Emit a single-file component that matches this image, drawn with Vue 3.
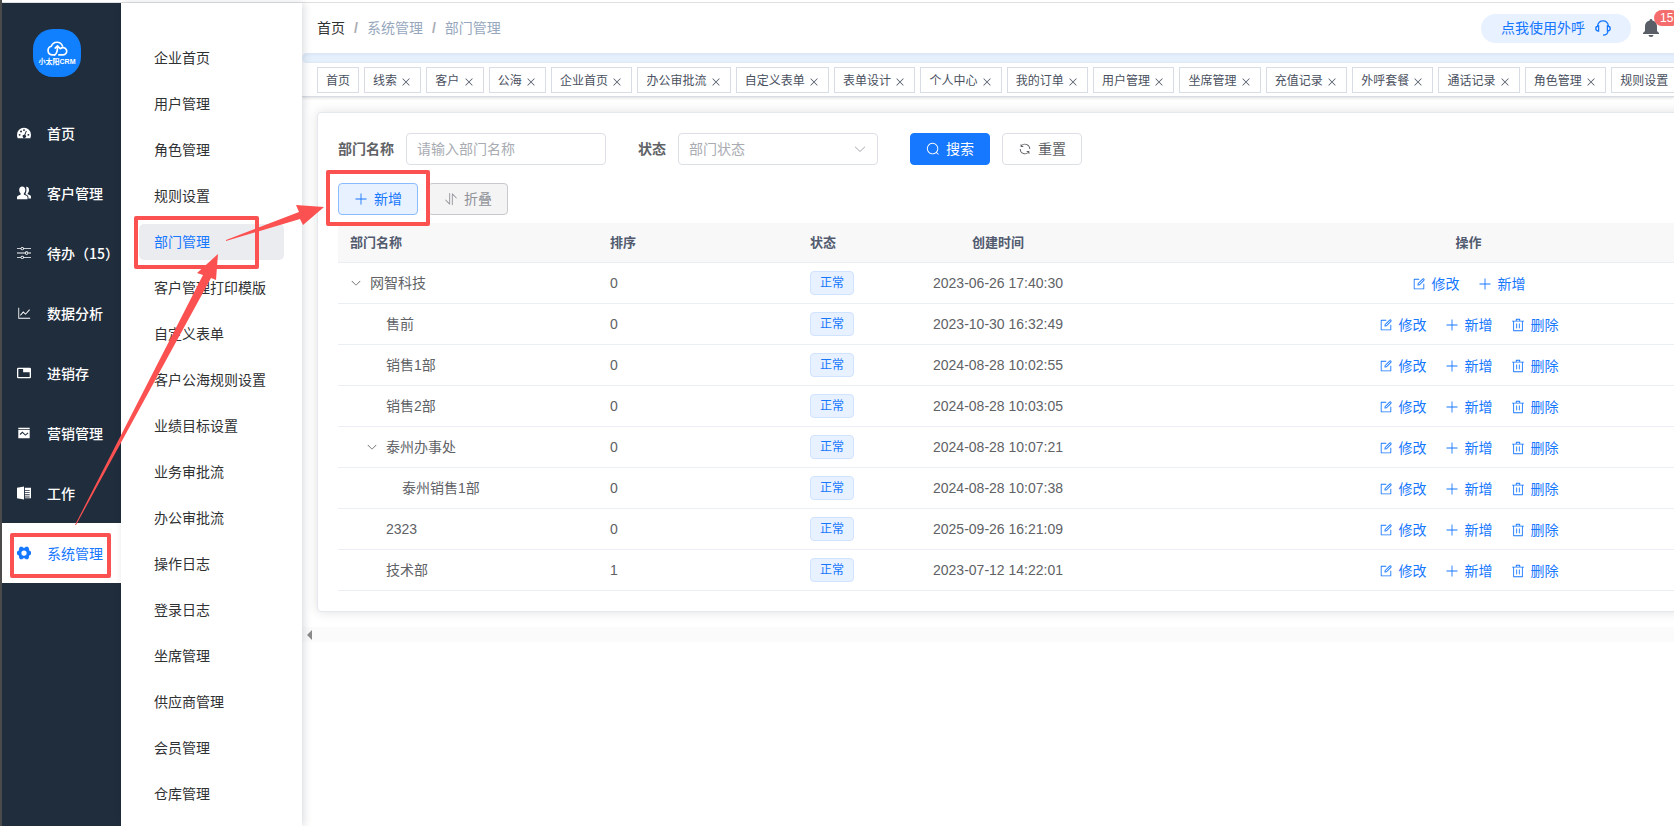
<template>
  <div class="app-wrapper">
    <nav class="sidebar" aria-label="主菜单">
      <div class="logo">
        <svg viewBox="0 0 24 18" width="22" height="17" fill="none" stroke="#fff" stroke-width="1.800" stroke-linecap="round" stroke-linejoin="round">
          <path d="M9.500 16H6.500A4.800 4.800 0 0 1 5.800 6.600 6.500 6.500 0 0 1 18 6.300" />
          <path d="M14 16h4.500a4 4 0 1 0-2.800-6.800" />
          <path d="M9.500 16c2.500-1.500 3.200-4 3-9.500M10 8.500l2.500-2.300L15 8.500" />
        </svg>
        <span>小太阳CRM</span>
      </div>
      <a
        v-for="item in mainMenu"
        :key="item.title"
        href="#"
        class="main-item"
        :class="{ active: item.title === '系统管理' }"
      >
        <svg class="main-icon" viewBox="0 0 16 16"><path :d="item.icon" fill-rule="evenodd" /></svg>
        <span>{{ item.title }}</span>
      </a>
    </nav>

    <nav class="submenu" aria-label="系统管理">
      <a
        v-for="title in subMenu"
        :key="title"
        href="#"
        class="sub-item"
        :class="{ active: title === '部门管理' }"
      >{{ title }}</a>
    </nav>

    <div class="main">
      <header class="navbar">
        <div class="breadcrumb">
          <a href="#">首页</a>
          <i>/</i>
          <span>系统管理</span>
          <i>/</i>
          <span>部门管理</span>
        </div>
        <div class="navbar-right">
          <button class="call-btn">
            点我使用外呼
            <svg viewBox="0 0 16 16" width="16" height="16" fill="none" stroke="currentColor" stroke-width="1.300">
              <path d="M2.600 6C3 2.800 5 .8 8 .8s5 2 5.400 5.200M3.600 6v5C1.800 11 .8 9.900.8 8.500S1.800 6 3.600 6zM12.400 6v5c1.800 0 2.800-1.100 2.800-2.500S14.200 6 12.400 6zM13 11c-.2 2.800-1.600 4.200-5 4.200" />
            </svg>
          </button>
          <button class="bell" aria-label="消息">
            <svg viewBox="0 0 18 20" width="18" height="20" fill="#5a5e66">
              <path d="M9 1a1.400 1.400 0 0 1 1.400 1.400C13.300 3 15 5.200 15 8v5l2 2v1H1v-1l2-2V8c0-2.800 1.700-5 4.600-5.600A1.400 1.400 0 0 1 9 1zM6.500 17h5a2.500 2 0 0 1-5 0z" />
            </svg>
            <sup class="badge">15</sup>
          </button>
        </div>
      </header>
      <div class="notice"></div>
      <div class="tags-view">
        <a v-for="tag in tags" :key="tag" href="#" class="tag">
          {{ tag }} <svg v-if="tag !== '首页'" viewBox="0 0 1024 1024"><path :d="icons.close" /></svg>
        </a>
      </div>

      <section class="content">
        <div class="card">
          <form class="search-form" @submit.prevent>
            <label for="deptName">部门名称</label>
            <input id="deptName" v-model="query.name" type="text" placeholder="请输入部门名称" />
            <label for="deptStatus" class="status-label">状态</label>
            <div class="select-wrap">
              <select id="deptStatus" v-model="query.status">
                <option value="">部门状态</option>
                <option value="0">正常</option>
                <option value="1">停用</option>
              </select>
              <svg viewBox="0 0 1024 1024"><path :d="icons.arrowDown" /></svg>
            </div>
            <button class="btn primary search" type="submit">
              <svg viewBox="0 0 1024 1024"><path :d="icons.search" /></svg>搜索
            </button>
            <button class="btn" type="button" @click="resetQuery">
              <svg viewBox="0 0 1024 1024"><path :d="icons.refresh" /></svg>重置
            </button>
          </form>

          <div class="toolbar">
            <button class="btn plain-primary">
              <svg viewBox="0 0 1024 1024"><path :d="icons.plus" /></svg>新增
            </button>
            <button class="btn plain-info">
              <svg viewBox="0 0 1024 1024"><path :d="icons.sort" /></svg>折叠
            </button>
          </div>

          <table class="dept-table">
            <colgroup>
              <col class="col-name" />
              <col class="col-sort" />
              <col class="col-status" />
              <col class="col-time" />
              <col />
            </colgroup>
            <thead>
              <tr>
                <th>部门名称</th>
                <th>排序</th>
                <th>状态</th>
                <th class="center">创建时间</th>
                <th class="center">操作</th>
              </tr>
            </thead>
            <tbody>
              <tr v-for="row in depts" :key="row.name">
                <td>
                  <div class="tree-cell" :class="'level-' + row.level">
                    <span class="expand">
                      <svg v-if="row.open" viewBox="0 0 1024 1024"><path :d="icons.arrowDown" /></svg>
                    </span>
                    {{ row.name }}
                  </div>
                </td>
                <td>{{ row.sort }}</td>
                <td><span class="status">正常</span></td>
                <td class="center">{{ row.time }}</td>
                <td>
                  <div class="ops">
                    <button><svg viewBox="0 0 1024 1024"><path :d="icons.edit" /></svg>修改</button>
                    <button><svg viewBox="0 0 1024 1024"><path :d="icons.plus" /></svg>新增</button>
                    <button v-if="row.level > 0"><svg viewBox="0 0 1024 1024"><path :d="icons.remove" /></svg>删除</button>
                  </div>
                </td>
              </tr>
            </tbody>
          </table>
        </div>
      </section>
      <div class="scrollbar"><span></span></div>
    </div>

    <!-- guide marks: menu -> submenu -> add button -->
    <svg class="guide" width="440" height="600" viewBox="0 0 440 600" aria-hidden="true">
      <g fill="none" stroke="#fc5151" stroke-width="4" stroke-linejoin="round">
        <rect x="12" y="535" width="97" height="41" />
        <rect x="136" y="218" width="121" height="49" />
        <rect x="328" y="172" width="100" height="52" />
      </g>
      <g fill="#fc5151">
        <path d="M75 525 203 275 197 273 218 254 216 280 211 278 76 525z" />
        <path d="M226 240 299 212 296 205 324 207 303 225 300 219 226 241z" />
      </g>
    </svg>
  </div>
</template>

<script setup>
import { reactive } from 'vue'

const icons = {
  plus: 'M480 480V128a32 32 0 0 1 64 0v352h352a32 32 0 1 1 0 64H544v352a32 32 0 1 1-64 0V544H128a32 32 0 0 1 0-64z',
  arrowDown: 'M831.872 340.864 512 652.672 192.128 340.864a30.592 30.592 0 0 0-42.752 0 29.12 29.12 0 0 0 0 41.6L489.664 714.24a32 32 0 0 0 44.672 0l340.288-331.712a29.12 29.12 0 0 0 0-41.728 30.592 30.592 0 0 0-42.752 0z',
  search: 'm795.904 750.72 124.992 124.928a32 32 0 0 1-45.248 45.248L750.656 795.904a416 416 0 1 1 45.248-45.248zM480 832a352 352 0 1 0 0-704 352 352 0 0 0 0 704',
  refresh: 'M771.776 794.88A384 384 0 0 1 128 512h64a320 320 0 0 0 555.712 216.448H654.72a32 32 0 1 1 0-64h149.056a32 32 0 0 1 32 32v148.928a32 32 0 1 1-64 0v-50.56zM276.288 295.616h92.992a32 32 0 0 1 0 64H220.16a32 32 0 0 1-32-32V178.56a32 32 0 0 1 64 0v50.56A384 384 0 0 1 896.128 512h-64a320 320 0 0 0-555.776-216.384z',
  sort: 'M384 96a32 32 0 0 1 64 0v786.752a32 32 0 0 1-54.592 22.656L95.936 608a32 32 0 0 1 0-45.312h.128a32 32 0 0 1 45.184 0L384 805.632zm192 45.248a32 32 0 0 1 54.592-22.592L928.064 416a32 32 0 0 1 0 45.312h-.128a32 32 0 0 1-45.184 0L640 218.496V928a32 32 0 1 1-64 0V141.248z',
  edit: 'M832 512a32 32 0 1 1 64 0v352a32 32 0 0 1-32 32H160a32 32 0 0 1-32-32V160a32 32 0 0 1 32-32h352a32 32 0 0 1 0 64H192v640h640zM469.952 554.24l52.8-7.552L847.104 222.4a32 32 0 1 0-45.248-45.248L477.44 501.44l-7.552 52.8zm422.4-422.4a96 96 0 0 1 0 135.808l-331.84 331.84a32 32 0 0 1-18.112 9.088L436.8 623.68a32 32 0 0 1-36.224-36.224l15.104-105.6a32 32 0 0 1 9.024-18.112l331.904-331.84a96 96 0 0 1 135.744 0z',
  remove: 'M160 256H96a32 32 0 0 1 0-64h256V95.936a32 32 0 0 1 32-32h256a32 32 0 0 1 32 32V192h256a32 32 0 1 1 0 64h-64v672a32 32 0 0 1-32 32H192a32 32 0 0 1-32-32zm448-64v-64H416v64zM224 896h576V256H224zm192-128a32 32 0 0 1-32-32V416a32 32 0 0 1 64 0v320a32 32 0 0 1-32 32m192 0a32 32 0 0 1-32-32V416a32 32 0 0 1 64 0v320a32 32 0 0 1-32 32',
  close: 'M764.288 214.592 512 466.88 259.712 214.592a31.936 31.936 0 0 0-45.12 45.12L466.752 512 214.528 764.224a31.936 31.936 0 1 0 45.12 45.184L512 557.184l252.288 252.288a31.936 31.936 0 0 0 45.12-45.12L557.12 512.064l252.288-252.352a31.936 31.936 0 1 0-45.12-45.184z',
}

const mainMenu = [
  { title: '首页', icon: 'M8 2a8 8 0 0 0-8 8c0 1.400.3 2.700.8 4h14.400c.5-1.300.8-2.600.8-4a8 8 0 0 0-8-8zM3 9a1.100 1.100 0 1 1 0 2.200A1.100 1.100 0 0 1 3 9zM4.600 5.200a1.100 1.100 0 1 1 0 2.200 1.100 1.100 0 0 1 0-2.200zM8 3.600a1.100 1.100 0 1 1 0 2.200 1.100 1.100 0 0 1 0-2.200zM13 9a1.100 1.100 0 1 1 0 2.200A1.100 1.100 0 0 1 13 9zM10.200 5.400l1 .3-1.700 4.700a1.900 1.900 0 1 1-1.100-.4z' },
  { title: '客户管理', icon: 'M6 .5C8.200.5 9.500 2 9.500 4.300c0 1.900-.7 3.400-1.700 4.200v1.200l3 1.500c.9.500 1.200 1 1.200 2V15H0v-1.800c0-1 .3-1.500 1.200-2l3-1.500V8.500c-1-.8-1.700-2.300-1.700-4.200C2.500 2 3.800.5 6 .5zM10.500 1c2-.1 3.200 1.200 3.200 3.500 0 1.700-.6 3-1.500 3.800v1l2.700 1.400c.8.400 1.100.9 1.100 1.800v1.700h-3v-1.400c0-1.200-.5-2-1.600-2.500L9.500 9.200C10.300 8 10.800 6.400 10.800 4.500c0-1.300-.1-2.500-.3-3.500z' },
  { title: '待办（15）', icon: 'M0 2.500h4.100a2 2 0 0 1 3.800 0H16v1H7.900a2 2 0 0 1-3.800 0H0zM6 2a1 1 0 1 0 0 2 1 1 0 0 0 0-2zM0 7.500h9.100a2 2 0 0 1 3.800 0H16v1h-3.100a2 2 0 0 1-3.800 0H0zM11 7a1 1 0 1 0 0 2 1 1 0 0 0 0-2zM0 12.500h4.100a2 2 0 0 1 3.800 0H16v1H7.900a2 2 0 0 1-3.800 0H0zM6 12a1 1 0 1 0 0 2 1 1 0 0 0 0-2z' },
  { title: '数据分析', icon: 'M1.500 2h1v11.500H15v1H1.500zM3.500 10.300l3.600-4.200 2.700 2.400L14 3.800l.8.800-5 5.400-2.600-2.400-3 3.500z' },
  { title: '进销存', icon: 'M1.500 2h13A1.500 1.500 0 0 1 16 3.500v9a1.500 1.500 0 0 1-1.500 1.500h-13A1.500 1.500 0 0 1 0 12.500v-9A1.500 1.500 0 0 1 1.500 2zM1.500 3.500v9h13V7H7V3.500z' },
  { title: '营销管理', icon: 'M1.500 2h13v1.300h-13zM1.500 4.300h13V14h-13zM3 9.200l.9 1 2.300-2.300 3.400 3.300L13 8.300l-.8-1-2.600 2.400-3.400-3.300z' },
  { title: '工作', icon: 'M0 2 8 .5v15L0 14zM9 2h7v12H9v-1h5.500v-1H9v-1.500h5.500v-1H9V8h5.500V7H9V5.500h5.500v-1H9z' },
  { title: '系统管理', icon: 'M3.800.8h2.400L7 2h2l.8-1.200h2.400l.6.400 1 2.300L13.600 4l.9 1.700 1.500.5v3.600l-1.500.5-.9 1.700.2.500-1 2.300-.6.400H9.800L9 14H7l-.8 1.200H3.800l-.6-.4-1-2.300.2-.5-.9-1.700L0 9.800V6.200l1.500-.5L2.400 4l-.2-.5 1-2.300zM8 5a3 3 0 1 0 0 6 3 3 0 0 0 0-6z' },
]

const subMenu = [
  '企业首页', '用户管理', '角色管理', '规则设置', '部门管理', '客户管理打印模版',
  '自定义表单', '客户公海规则设置', '业绩目标设置', '业务审批流', '办公审批流',
  '操作日志', '登录日志', '坐席管理', '供应商管理', '会员管理', '仓库管理',
]

const tags = [
  '首页', '线索', '客户', '公海', '企业首页', '办公审批流', '自定义表单', '表单设计',
  '个人中心', '我的订单', '用户管理', '坐席管理', '充值记录', '外呼套餐', '通话记录',
  '角色管理', '规则设置',
]

const depts = [
  { name: '网智科技', level: 0, sort: 0, time: '2023-06-26 17:40:30', open: true },
  { name: '售前', level: 1, sort: 0, time: '2023-10-30 16:32:49' },
  { name: '销售1部', level: 1, sort: 0, time: '2024-08-28 10:02:55' },
  { name: '销售2部', level: 1, sort: 0, time: '2024-08-28 10:03:05' },
  { name: '泰州办事处', level: 1, sort: 0, time: '2024-08-28 10:07:21', open: true },
  { name: '泰州销售1部', level: 2, sort: 0, time: '2024-08-28 10:07:38' },
  { name: '2323', level: 1, sort: 0, time: '2025-09-26 16:21:09' },
  { name: '技术部', level: 1, sort: 1, time: '2023-07-12 14:22:01' },
]

const query = reactive({ name: '', status: '' })

function resetQuery() {
  query.name = ''
  query.status = ''
}
</script>

<style>
body {
  background: #fff;
}
</style>

<style scoped>
* {
  box-sizing: border-box;
}

.app-wrapper {
  position: relative;
  display: flex;
  height: 100vh;
  overflow: hidden;
  padding-top: 3px;
  border-left: 2px solid #4b4b4b;
  background: linear-gradient(#fff 2px, #e0e0e0 2px, #e0e0e0 3px, #fff 3px);
  color: #606266;
  font-family: "Liberation Sans", "Noto Sans CJK SC", sans-serif;
  font-size: 14px;
  line-height: 20px;
}

a {
  color: inherit;
  text-decoration: none;
}

button,
input,
select {
  font: inherit;
  color: inherit;
}

button {
  cursor: pointer;
}

svg {
  flex: none;
}

/* sidebar */
.sidebar {
  flex: none;
  width: 119px;
  background: #202d3d;
}

.logo {
  display: flex;
  flex-direction: column;
  align-items: center;
  width: 48px;
  height: 48px;
  margin: 26px 0 26px 31px;
  padding-top: 11px;
  border-radius: 20px;
  background: #1080ff;
  color: #fff;
  font-size: 7px;
  font-weight: 700;
  line-height: 10px;
  white-space: nowrap;
}

.main-item {
  display: flex;
  align-items: center;
  gap: 16px;
  height: 60px;
  padding-left: 15px;
  color: #fff;
  white-space: nowrap;
  font-family: "Noto Sans CJK SC", sans-serif;
  font-weight: 500;
}

.main-item.active {
  background: #fff;
  color: #1677ff;
  font-weight: 400;
}

.main-icon {
  width: 14px;
  height: 14px;
  fill: currentColor;
}

/* submenu */
.submenu {
  position: relative;
  z-index: 1;
  display: flex;
  flex: none;
  flex-direction: column;
  gap: 10px;
  width: 181px;
  padding: 37px 18px 0;
  background: #fff;
  box-shadow: 2px 0 8px rgba(0, 21, 41, 0.15);
}

.sub-item {
  flex: none;
  height: 36px;
  padding-left: 15px;
  border-radius: 5px;
  color: #303133;
  line-height: 36px;
}

.sub-item.active {
  background: #ebecf0;
  color: #1677ff;
}

/* header */
.main {
  flex: 1;
  min-width: 0;
  overflow: hidden;
}

.navbar {
  display: flex;
  align-items: center;
  justify-content: space-between;
  height: 50px;
  padding: 0 14px 0 15px;
}

.breadcrumb {
  display: flex;
  align-items: baseline;
  gap: 9px;
  color: #97a8be;
}

.breadcrumb a {
  color: #303133;
}

.breadcrumb i {
  font-style: normal;
  font-weight: 700;
  color: #a8abb2;
}

.navbar-right {
  display: flex;
  align-items: center;
  gap: 11px;
}

.call-btn {
  display: flex;
  align-items: center;
  gap: 10px;
  height: 29px;
  padding: 0 20px;
  border: 0;
  border-radius: 15px;
  background: #e8f1ff;
  color: #1677ff;
}

.bell {
  position: relative;
  display: flex;
  padding: 0;
  border: 0;
  background: none;
}

.badge {
  position: absolute;
  top: -8px;
  left: 12px;
  height: 16px;
  padding: 0 6px;
  border-radius: 8px;
  background: #f56c6c;
  color: #fff;
  font-size: 12px;
  line-height: 16px;
}

.notice {
  height: 10px;
  border-radius: 5px 0 0 5px;
  background: linear-gradient(#dce6f5, #e6f0fd 4px);
}

.tags-view {
  position: relative;
  display: flex;
  gap: 5px;
  height: 34px;
  padding: 4px 0 0 15px;
  border-bottom: 1px solid #d8dce5;
  background: #fff;
  box-shadow: 0 1px 3px rgba(0, 0, 0, 0.14);
}

.tag {
  flex: none;
  height: 26px;
  padding: 0 8px;
  border: 1px solid #d8dce5;
  color: #495060;
  font-size: 12px;
  line-height: 26px;
  white-space: nowrap;
}

.tag svg {
  width: 12px;
  height: 12px;
  fill: currentColor;
  vertical-align: -3px;
}

/* content: the table is wider than the window and is cut off on the right */
.content {
  padding: 15px;
}

.card {
  min-width: 1543px;
  padding: 20px;
  border: 1px solid #e4e7ed;
  border-radius: 4px;
  background: #fff;
  box-shadow: 0 0 12px rgba(0, 0, 0, 0.12);
}

.search-form {
  display: flex;
  align-items: center;
  gap: 12px;
}

.search-form label {
  font-weight: 700;
}

.search-form .status-label {
  margin-left: 20px;
}

.search-form input,
.search-form select {
  display: block;
  width: 200px;
  height: 32px;
  padding: 0 10px;
  border: 1px solid #dcdfe6;
  border-radius: 4px;
  background: #fff;
  outline: none;
}

.search-form input::placeholder {
  color: #a8abb2;
}

.select-wrap {
  position: relative;
}

.select-wrap select {
  appearance: none;
  color: #a8abb2;
}

.select-wrap svg {
  position: absolute;
  top: 9px;
  right: 11px;
  width: 14px;
  height: 14px;
  fill: #a8abb2;
  pointer-events: none;
}

.btn {
  display: flex;
  align-items: center;
  gap: 6px;
  height: 32px;
  padding: 0 15px;
  border: 1px solid #dcdfe6;
  border-radius: 4px;
  background: #fff;
}

.btn svg,
.ops svg {
  width: 14px;
  height: 14px;
  fill: currentColor;
}

.btn.search {
  margin-left: 20px;
}

.btn.primary {
  border-color: #1677ff;
  background: #1677ff;
  color: #fff;
}

.btn.plain-primary {
  border-color: #8bbbff;
  background: #e8f1ff;
  color: #1677ff;
}

.btn.plain-info {
  border-color: #c8c9cc;
  background: #f4f4f5;
  color: #909399;
}

.toolbar {
  display: flex;
  gap: 10px;
  margin: 18px 0 8px;
}

.dept-table {
  width: 100%;
  border-collapse: separate;
  border-spacing: 0;
  table-layout: fixed;
}

.col-name {
  width: 260px;
}

.col-sort,
.col-time {
  width: 200px;
}

.col-status {
  width: 100px;
}

th {
  height: 40px;
  padding: 0 12px;
  border-bottom: 1px solid #ebeef5;
  background: #f8f8f9;
  color: #515a6e;
  font-size: 13px;
  text-align: left;
}

td {
  height: 41px;
  padding: 0 12px;
  border-bottom: 1px solid #ebeef5;
}

.center {
  text-align: center;
}

.tree-cell {
  display: flex;
  align-items: center;
}

.tree-cell.level-1 {
  padding-left: 16px;
}

.tree-cell.level-2 {
  padding-left: 32px;
}

.expand {
  display: flex;
  width: 12px;
  margin-right: 8px;
}

.expand svg {
  width: 12px;
  height: 12px;
  fill: currentColor;
}

.status {
  display: inline-block;
  height: 24px;
  padding: 0 9px;
  border: 1px solid #d0e4ff;
  border-radius: 4px;
  background: #e8f1ff;
  color: #1677ff;
  font-size: 12px;
  line-height: 22px;
  vertical-align: middle;
}

.ops {
  display: flex;
  justify-content: center;
  gap: 18px;
  padding-top: 2px;
}

.ops button {
  display: flex;
  align-items: center;
  gap: 6px;
  padding: 0;
  border: 0;
  background: none;
  color: #1677ff;
}

.scrollbar {
  display: flex;
  align-items: center;
  height: 15px;
  padding-left: 5px;
  background: #fbfbfb;
}

.scrollbar span {
  border: 5px solid transparent;
  border-right-color: #8b8b8b;
  border-left: 0;
}

.guide {
  position: absolute;
  top: 0;
  left: -2px;
  z-index: 2;
  pointer-events: none;
}
</style>
